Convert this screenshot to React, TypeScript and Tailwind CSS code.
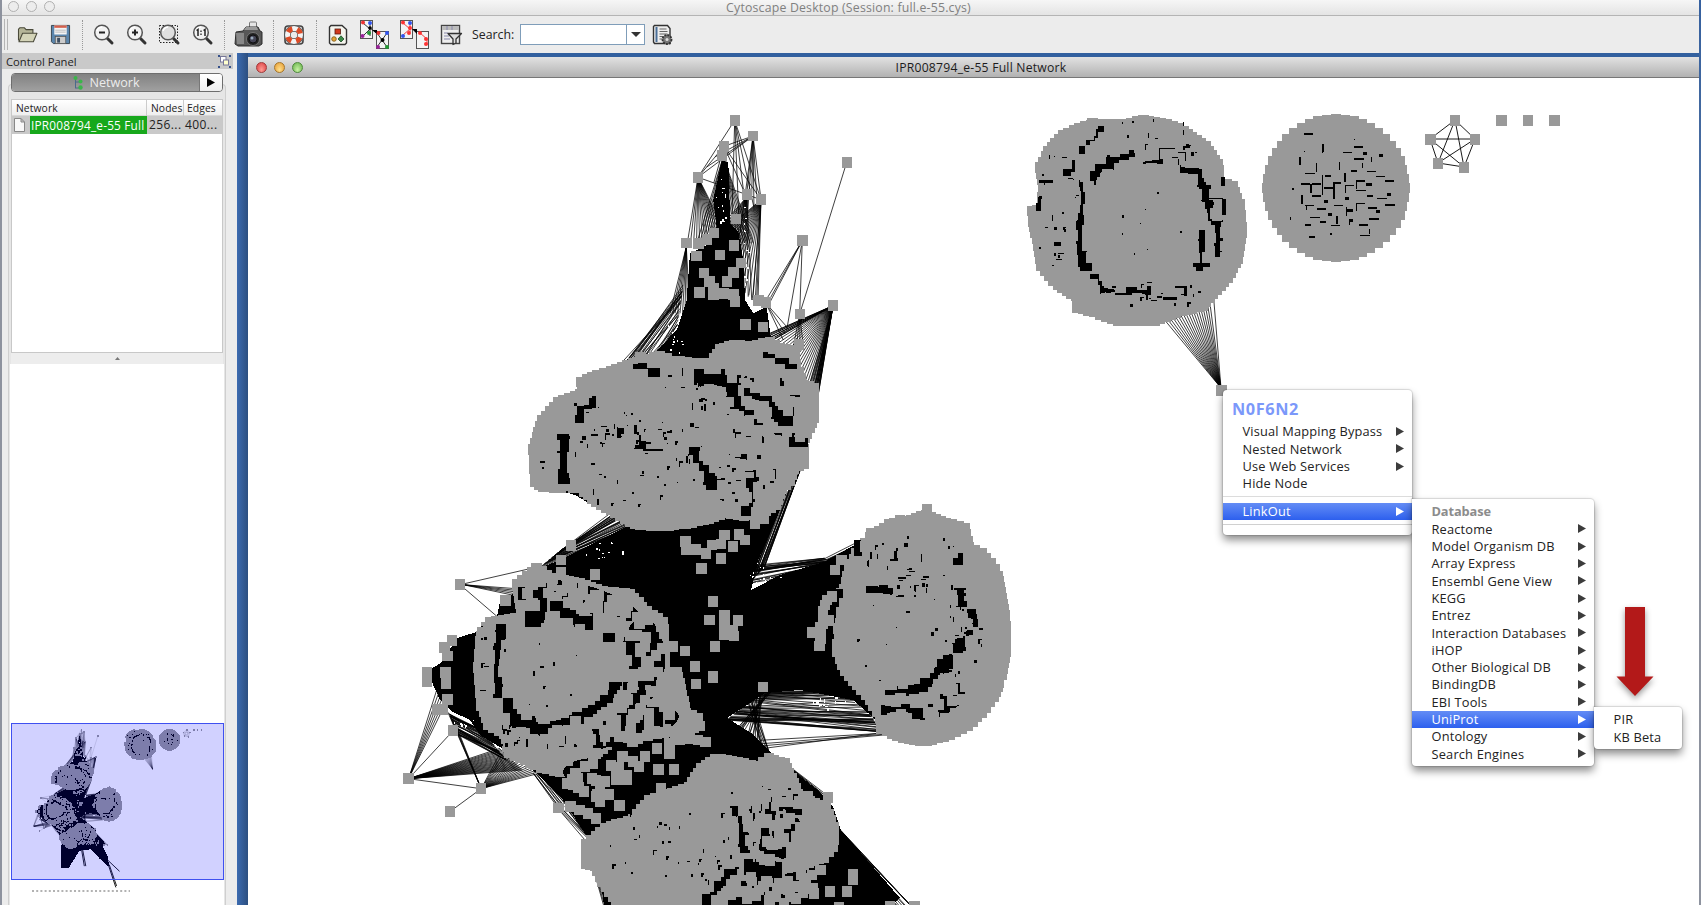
import React from "react";

type Pt = [number, number];

/* ---------- geometry helpers ---------- */
const tile = (ox: number, oy: number, kx: number, ky: number) => (list: number[]): Pt[] => {
  const out: Pt[] = [];
  for (let i = 0; i < list.length; i += 2) out.push([ox + list[i] / kx, oy + list[i + 1] / ky]);
  return out;
};
const neck = tile(400, 100, 3, 3);
const mid = tile(400, 380, 2.45, 3);
const low = tile(400, 620, 2.45, 3);
const east = tile(1010, 100, 2.613, 3);
const raw = tile(0, 0, 1, 1);

const makeRandom = (seed: number) => () => {
  seed = (seed * 1664525 + 1013904223) % 4294967296;
  return seed / 4294967296;
};
const poly = (p: Pt[]) => p.map((q) => q[0].toFixed(1) + "," + q[1].toFixed(1)).join(" ");
const box = (x: number, y: number, w: number, h: number) => `M${x.toFixed(1)} ${y.toFixed(1)}h${w.toFixed(1)}v${h.toFixed(1)}h${(-w).toFixed(1)}z`;
const squares = (p: Pt[]) => p.map((q) => box(q[0] - 5.2, q[1] - 5.4, 10.4, 10.8)).join("");

/* walk a polyline in even steps */
const walk = (p: Pt[], step: number, closed: boolean): Pt[] => {
  const out: Pt[] = [];
  const n = closed ? p.length : p.length - 1;
  for (let i = 0; i < n; i++) {
    const a = p[i];
    const b = p[(i + 1) % p.length];
    const d = Math.hypot(b[0] - a[0], b[1] - a[1]);
    const k = Math.max(1, Math.round(d / step));
    for (let j = 0; j < k; j++) out.push([a[0] + ((b[0] - a[0]) * j) / k, a[1] + ((b[1] - a[1]) * j) / k]);
  }
  return out;
};

/* cluster of nodes: filled outline with square nodes on its rim */
const Cluster = ({ outline, step = 6 }: { outline: Pt[]; step?: number }) => {
  const cx = outline.reduce((s, q) => s + q[0], 0) / outline.length;
  const cy = outline.reduce((s, q) => s + q[1], 0) / outline.length;
  const rim = outline.map(([x, y]): Pt => {
    const d = Math.hypot(x - cx, y - cy) || 1;
    return [x - ((x - cx) / d) * 5, y - ((y - cy) / d) * 5];
  });
  return (
    <>
      <polygon points={poly(rim)} />
      <path d={squares(walk(rim, step, true))} />
    </>
  );
};
const oval = (cx: number, cy: number, rx: number, ry: number, n = 48): Pt[] =>
  Array.from({ length: n }, (_, i): Pt => [cx + rx * Math.cos((i * 2 * Math.PI) / n), cy + ry * Math.sin((i * 2 * Math.PI) / n)]);

/* gap between rows of nodes: a dark band bitten into by the nodes on both sides */
const Gap = ({ p, size, seed }: { p: Pt[]; size: number; seed: number }) => {
  const r = makeRandom(seed);
  const q = walk(p, 5, false);
  let dark = "";
  const nodes: Pt[] = [];
  for (let i = 0; i < q.length - 1; i++) {
    const [x, y] = q[i];
    const [u, v] = q[i + 1];
    const s = size + 3;
    dark += box(Math.min(x, u) - s / 2, Math.min(y, v) - s / 2, Math.abs(u - x) + s, Math.abs(v - y) + s);
    const l = Math.hypot(u - x, v - y) || 1;
    const nx = -(v - y) / l;
    const ny = (u - x) / l;
    for (const side of [-1, 1]) {
      if (r() < 0.35) continue;
      const off = side * (size / 2 + 3.6 + r() * 3.4);
      nodes.push([x + nx * off + (r() - 0.5) * 3, y + ny * off + (r() - 0.5) * 3]);
    }
  }
  return (
    <>
      <path d={dark} />
      <path fill="#999" d={squares(nodes)} />
    </>
  );
};

/* loosely packed nodes over a dark ground */
const Field = ({ cx, cy, rx, ry, pitch, jitter, seed, turn = 0 }: { cx: number; cy: number; rx: number; ry: number; pitch: number; jitter: number; seed: number; turn?: number }) => {
  const r = makeRandom(seed);
  const nodes: Pt[] = [];
  const c = Math.cos((turn * Math.PI) / 180);
  const s = Math.sin((turn * Math.PI) / 180);
  for (let y = -ry - 6; y <= ry + 6; y += pitch)
    for (let x = -rx - 6; x <= rx + 6; x += pitch) {
      if ((x / (rx + 6)) ** 2 + (y / (ry + 6)) ** 2 > 1) continue;
      const px = x + (r() - 0.5) * jitter;
      const py = y + (r() - 0.5) * jitter;
      nodes.push([cx + px * c - py * s, cy + px * s + py * c]);
    }
  return (
    <>
      <ellipse cx={cx} cy={cy} rx={rx} ry={ry} transform={`rotate(${turn} ${cx} ${cy})`} />
      <path fill="#999" d={squares(nodes)} />
    </>
  );
};

/* random small gaps in an ellipse */
const specks = (cx: number, cy: number, rx: number, ry: number, count: number, max: number, seed: number) => {
  const r = makeRandom(seed);
  let d = "";
  for (let i = 0; i < count; i++) {
    const a = r() * Math.PI * 2;
    const m = Math.sqrt(r());
    const x = cx + Math.cos(a) * rx * m;
    const y = cy + Math.sin(a) * ry * m;
    const kind = r();
    const s = 1 + r() * max;
    if (kind < 0.25) d += box(x, y, s * 1.5, 1.3);
    else if (kind < 0.5) d += box(x, y, 1.2, s * 1.8);
    else if (kind < 0.82) d += box(x, y, s * 0.8, s * 0.9);
    else d += box(x, y, s * 1.2, 1.5) + box(x, y, 1.6, s * 1.5);
  }
  return d;
};

/* edges from one node to points spread on a line */
const fan = (from: Pt, a: Pt, b: Pt, n: number) =>
  Array.from({ length: n }, (_, i) => {
    const t = n === 1 ? 0 : i / (n - 1);
    return `M${from[0].toFixed(1)} ${from[1].toFixed(1)}L${(a[0] + (b[0] - a[0]) * t).toFixed(1)} ${(a[1] + (b[1] - a[1]) * t).toFixed(1)}`;
  }).join("");
/* edges between two lines */
const weave = (a: Pt, b: Pt, c: Pt, d: Pt, n: number, seed: number) => {
  const r = makeRandom(seed);
  let s = "";
  for (let i = 0; i < n; i++) {
    const t = r();
    const u = Math.min(1, Math.max(0, t + (r() - 0.5) * 0.6));
    s += `M${(a[0] + (b[0] - a[0]) * t).toFixed(1)} ${(a[1] + (b[1] - a[1]) * t).toFixed(1)}L${(c[0] + (d[0] - c[0]) * u).toFixed(1)} ${(c[1] + (d[1] - c[1]) * u).toFixed(1)}`;
  }
  return s;
};

/* ---------- network data ---------- */
const head: Pt[] = [
  ...neck([530, 840, 580, 818, 620, 806, 690, 778, 740, 765, 775, 755, 815, 768, 880, 774, 940, 776, 965, 735, 1010, 722, 1060, 728, 1120, 716, 1150, 735, 1195, 745, 1200, 790, 1225, 850]),
  ...mid([1025, 20, 1027, 110, 1010, 160, 1000, 190, 1000, 255, 975, 270, 965, 310, 945, 330, 930, 385, 890, 410, 850, 420, 800, 410, 760, 430, 700, 445, 640, 452, 570, 445, 520, 410, 460, 365, 430, 330, 380, 330, 340, 325, 320, 310, 315, 210, 335, 120, 375, 65, 430, 40, 440, 0]),
];
const westLobe: Pt[] = [
  ...mid([280, 600, 330, 552, 370, 580, 440, 595, 500, 620, 570, 630, 600, 670, 655, 720, 662, 880]),
  ...low([660, 155, 690, 155, 712, 285, 740, 300, 730, 330, 640, 350, 600, 350, 530, 360, 500, 400, 460, 425, 450, 470, 390, 470, 340, 455, 260, 410, 245, 350, 205, 320, 188, 260, 180, 140, 185, 60]),
  ...mid([190, 750, 210, 720, 290, 700, 285, 640]),
];
const eastLobe: Pt[] = [
  ...mid([1290, 390, 1340, 415, 1388, 430, 1400, 490, 1432, 507, 1457, 540, 1475, 580, 1487, 650, 1496, 740, 1497, 820, 1485, 890]),
  ...low([1478, 195, 1463, 240, 1432, 290, 1397, 330, 1350, 358, 1290, 378, 1230, 368, 1175, 340, 1172, 305, 1145, 250, 1110, 205, 1080, 160, 1060, 100]),
  ...mid([1058, 770, 1055, 700, 1040, 680, 1078, 620, 1090, 560, 1110, 510, 1145, 460, 1195, 420, 1250, 405]),
];
const southLobe: Pt[] = low([445, 675, 490, 625, 560, 595, 600, 535, 700, 490, 735, 430, 770, 402, 830, 412, 880, 425, 910, 402, 950, 420, 975, 480, 985, 515, 1015, 540, 1055, 560, 1075, 620, 1073, 680, 1050, 715, 1000, 738, 960, 750, 930, 775, 890, 770, 860, 755, 820, 760, 790, 790, 770, 830, 740, 850, 640, 856, 520, 852, 485, 790, 465, 740, 443, 735]);

const body: Pt[] = raw([
  560, 490, 577, 496, 608, 515, 640, 520, 590, 545, 560, 560, 540, 568, 520, 590, 500, 602, 497, 617, 480, 631, 457, 638, 441, 663, 427, 671, 440, 700, 453, 712, 470, 720, 480, 735, 500, 747, 535, 772, 563, 800, 588, 838, 590, 853, 602, 890, 604, 906,
  596, 906, 596, 1066, 650, 1060, 722, 945, 800, 935, 860, 1000, 925, 1056, 915, 985, 880, 915, 900, 898, 841, 830, 833, 807, 820, 792, 788, 767, 771, 753, 751, 733, 727, 718, 750, 703, 765, 693, 800, 690, 853, 700, 882, 725, 926, 600, 926, 512, 869, 537, 824, 562, 780, 575, 751, 590, 758, 560, 780, 510, 751, 500, 640, 500, 575, 470, 560, 470,
]);
const neckMass: Pt[] = neck([965, 185, 985, 185, 988, 270, 990, 370, 1015, 395, 1030, 480, 1035, 600, 1060, 640, 1100, 620, 1112, 710, 1100, 800, 800, 800, 770, 752, 830, 690, 860, 600, 870, 460, 930, 430, 950, 380, 940, 300]);

const neckNodes = neck([
  1004, 61, 1059, 108, 972, 139, 965, 167, 894, 232, 1041, 283, 1083, 299, 1340, 187, 1007, 357, 941, 399, 920, 418, 859, 429, 895, 430, 889, 468, 1001, 437, 960, 465, 1023, 489, 1000, 517, 912, 519, 928, 545, 981, 545, 940, 565, 898, 577, 940, 584, 970, 580, 1000, 583, 1005, 605, 1207, 422, 1299, 617, 1199, 642, 1075, 601, 1098, 607, 1036, 673, 1088, 681, 1196, 734, 1182, 775, 1010, 738,
]);
const midNodes = mid([
  1291, 388, 147, 614, 419, 496, 395, 540, 395, 576, 477, 583, 333, 565, 258, 661, 739, 565, 766, 665, 758, 720, 771, 799, 698, 813, 722, 860, 766, 890, 668, 800, 675, 886, 699, 485, 700, 508, 725, 508, 750, 520, 765, 495, 787, 535, 795, 465, 787, 492, 815, 500, 830, 463, 845, 480, 870, 430, 890, 415, 795, 705, 828, 722, 795, 735, 815, 750, 795, 765, 818, 768, 1010, 758, 1030, 775, 1028, 798, 1050, 722, 1065, 570, 127, 782, 109, 802, 116, 828, 66, 878, 111, 878, 1155, 460, 1225, 420, 1375, 445, 1082, 540,
]);
const lowNodes = low([
  66, 158, 66, 186, 111, 158, 112, 190, 116, 238, 90, 268, 104, 268, 130, 332, 21, 476, 199, 506, 122, 575, 889, 201, 722, 140, 725, 192, 767, 172, 571, 195, 537, 237, 520, 283, 748, 366, 660, 401, 671, 449, 640, 505, 538, 556, 388, 564, 418, 560, 633, 449, 1048, 533, 1000, 530, 1110, 762, 1110, 778, 1054, 814, 1095, 815, 1260, 858, 1200, 858, 1075, 862, 1030, 750, 1010, 765, 990, 785, 975, 800, 1012, 805, 970, 835, 940, 850, 905, 840, 880, 810, 850, 815, 820, 780, 822, 800, 810, 825, 790, 850, 850, 835, 930, 800, 950, 810,
  600, 240, 615, 215, 640, 195, 660, 260, 590, 265, 610, 310, 545, 350, 565, 335, 660, 370, 685, 358, 710, 355, 730, 360, 630, 385, 600, 410, 545, 410, 570, 425, 585, 440, 530, 450, 555, 465, 530, 480, 555, 480, 470, 475, 430, 460, 425, 495, 410, 490, 450, 515, 490, 495, 480, 530, 510, 525, 490, 545, 440, 570, 460, 580, 480, 595, 735, 318, 690, 325, 430, 305, 500, 330, 480, 400,
]);

const NetworkDrawing = React.memo(() => (
  <g shapeRendering="crispEdges">
    <g fill="none" stroke="#000" strokeWidth={0.75} shapeRendering="auto">
      {/* edges round the neck */}
      <path
        d={
          fan(neck([1004, 61])[0], neck([894, 232])[0], neck([894, 232])[0], 1) +
          fan(neck([1004, 61])[0], neck([995, 380])[0], neck([1083, 299])[0], 5) +
          fan(neck([1059, 108])[0], neck([1020, 400])[0], neck([1083, 299])[0], 4) +
          fan(neck([1059, 108])[0], neck([894, 232])[0], neck([972, 139])[0], 4) +
          fan(neck([1059, 108])[0], neck([1040, 283])[0], neck([1070, 290])[0], 3) +
          fan(neck([894, 232])[0], neck([862, 430])[0], neck([1000, 440])[0], 16) +
          fan(neck([894, 232])[0], neck([1083, 299])[0], neck([1083, 299])[0], 1) +
          fan(neck([972, 139])[0], neck([894, 232])[0], neck([1083, 299])[0], 5) +
          fan(neck([970, 170])[0], neck([890, 430])[0], neck([1060, 430])[0], 20) +
          fan(neck([1083, 299])[0], neck([870, 480])[0], neck([1070, 600])[0], 18) +
          fan(neck([1041, 290])[0], neck([900, 450])[0], neck([1055, 600])[0], 16) +
          fan(neck([1083, 299])[0], neck([1058, 600])[0], neck([1074, 600])[0], 3) +
          fan(neck([1207, 422])[0], neck([1098, 600])[0], neck([1050, 720])[0], 3) +
          fan(neck([1207, 422])[0], neck([1160, 690])[0], neck([1199, 640])[0], 2) +
          fan(neck([1340, 187])[0], neck([1199, 642])[0], neck([1199, 642])[0], 1) +
          fan(neck([1299, 617])[0], neck([1090, 712])[0], neck([1250, 900])[0], 26) +
          fan(neck([1299, 617])[0], neck([1220, 880])[0], neck([1252, 900])[0], 10) +
          fan(neck([1199, 642])[0], neck([1180, 740])[0], neck([1210, 740])[0], 4) +
          fan(neck([1098, 610])[0], neck([1160, 680])[0], neck([1150, 720])[0], 3) +
          fan(neck([859, 440])[0], neck([810, 640])[0], neck([870, 640])[0], 9) +
          weave(neck([850, 550])[0], neck([830, 690])[0], neck([650, 810])[0], neck([760, 790])[0], 26, 3) +
          `M${neck([810, 630])[0]}L${neck([640, 815])[0]}`
        }
      />
      <path strokeWidth={1} d={fan(neck([1299, 617])[0], neck([1110, 700])[0], neck([1110, 725])[0], 5) + fan(neck([1299, 617])[0], neck([1236, 895])[0], neck([1252, 900])[0], 5)} />
      {/* edges of the middle */}
      <path
        d={
          weave(mid([400, 505])[0], mid([340, 565])[0], mid([515, 400])[0], mid([570, 450])[0], 34, 7) +
          fan(mid([147, 614])[0], mid([333, 562])[0], mid([333, 562])[0], 1) +
          fan(mid([155, 614])[0], mid([285, 626])[0], mid([275, 645])[0], 5) +
          fan(mid([147, 614])[0], mid([240, 712])[0], mid([240, 712])[0], 1) +
          weave(mid([985, 260])[0], mid([920, 390])[0], mid([893, 560])[0], mid([850, 620])[0], 22, 9) +
          weave(mid([830, 560])[0], mid([850, 640])[0], mid([1040, 535])[0], mid([1080, 570])[0], 26, 10) +
          weave(mid([1040, 535])[0], mid([1060, 560])[0], mid([1155, 465])[0], mid([1180, 490])[0], 14, 12) +
          fan(mid([1291, 388])[0], mid([1330, 425])[0], mid([1330, 440])[0], 3) +
          weave(low([885, 215])[0], low([800, 300])[0], low([1110, 210])[0], low([1180, 335])[0], 50, 13) +
          weave(low([840, 270])[0], low([900, 400])[0], low([1160, 290])[0], low([1185, 345])[0], 7, 22) +
          weave(low([910, 215])[0], low([850, 240])[0], low([830, 320])[0], low([905, 400])[0], 24, 15)
        }
      />
      {/* edges of the west and south */}
      <path
        d={
          fan(low([21, 476])[0], low([90, 210])[0], low([116, 240])[0], 6) +
          fan(low([21, 476])[0], low([130, 332])[0], low([130, 332])[0], 1) +
          fan(low([21, 476])[0], low([245, 385])[0], low([300, 450])[0], 22) +
          fan(low([21, 476])[0], low([199, 506])[0], low([199, 506])[0], 1) +
          fan(low([199, 506])[0], low([115, 270])[0], low([145, 340])[0], 5) +
          fan(low([199, 506])[0], low([245, 400])[0], low([340, 460])[0], 18) +
          fan(low([199, 506])[0], low([122, 575])[0], low([122, 575])[0], 1) +
          weave(low([120, 280])[0], low([140, 345])[0], low([200, 330])[0], low([260, 420])[0], 44, 18) +
          weave(low([325, 460])[0], low([360, 470])[0], low([385, 560])[0], low([420, 550])[0], 12, 4) +
          weave(low([380, 560])[0], low([430, 560])[0], low([460, 670])[0], low([480, 640])[0], 14, 5) +
          weave(low([465, 730])[0], low([480, 740])[0], low([495, 855])[0], low([520, 855])[0], 8, 6) +
          weave(low([1080, 630])[0], low([1060, 640])[0], low([1250, 855])[0], low([1200, 855])[0], 18, 8) +
          weave(low([945, 430])[0], low([960, 450])[0], low([1040, 520])[0], low([1000, 540])[0], 12, 11)
        }
      />
      <path d="M925 1040L975 1185M915 1030L970 1195M905 1000L995 1085M742 930L765 1050M735 930L755 1050" strokeWidth={6} />
    </g>

    <polygon points={poly(neckMass)} />
    <polygon points={poly(body)} />
    <path
      fill="#fff"
      d={
        specks(765, 574, 18, 12, 14, 0.6, 55) + specks(826, 702, 32, 6, 16, 1, 56) + specks(465, 722, 12, 5, 6, 1, 57) + specks(603, 550, 20, 9, 14, 0.5, 58) +
        specks(722, 200, 6, 26, 12, 1, 59) + specks(675, 335, 8, 22, 12, 0.5, 63) + specks(745, 245, 3, 40, 14, 1, 62)
      }
    />

    <g fill="#999">
      <Cluster outline={oval(662, 905, 42, 26)} />
      <Cluster outline={head} />
      <Cluster outline={westLobe} />
      <Cluster outline={eastLobe} />
      <Cluster outline={southLobe} />
    </g>

    {/* loosely packed parts */}
    <Field cx={765} cy={412} rx={38} ry={42} pitch={9.4} jitter={6.5} seed={101} />
    <Field cx={745} cy={475} rx={36} ry={26} pitch={9.3} jitter={5.5} seed={102} turn={-30} />
    <Field cx={680} cy={378} rx={60} ry={10} pitch={9.2} jitter={6} seed={103} />
    <Field cx={590} cy={601} rx={52} ry={14} pitch={9.6} jitter={7} seed={104} turn={18} />
    <Field cx={643} cy={660} rx={22} ry={42} pitch={11.2} jitter={9} seed={105} />
    <Field cx={620} cy={728} rx={60} ry={17} pitch={12} jitter={10} seed={106} turn={-12} />
    <Field cx={552} cy={738} rx={42} ry={11} pitch={9.6} jitter={6.5} seed={107} />
    <Field cx={595} cy={772} rx={32} ry={14} pitch={12.5} jitter={10} seed={108} />
    <Field cx={768} cy={832} rx={34} ry={30} pitch={9.8} jitter={7} seed={109} />
    <Field cx={775} cy={885} rx={36} ry={12} pitch={11} jitter={9} seed={110} />
    <Field cx={938} cy={700} rx={32} ry={16} pitch={9.8} jitter={7} seed={111} turn={-25} />
    <Field cx={895} cy={575} rx={34} ry={24} pitch={9.2} jitter={5.5} seed={112} />

    {/* gaps inside the head */}
    <Gap p={neck([710, 805, 740, 800, 780, 830])} size={5} seed={1} />
    <Gap p={neck([905, 830, 960, 830, 1000, 860, 1010, 900])} size={13} seed={2} />
    <Gap p={mid([745, 0, 790, 5, 820, 40, 830, 75, 860, 90])} size={10} seed={3} />
    <Gap p={mid([855, 40, 910, 65, 930, 100, 960, 130])} size={8} seed={4} />
    <Gap p={neck([1100, 768, 1150, 782, 1195, 800])} size={5} seed={5} />
    <Gap p={mid([470, 60, 440, 90, 440, 130])} size={6} seed={6} />
    <Gap p={mid([400, 180, 400, 235, 402, 310])} size={9} seed={36} />
    <Gap p={mid([545, 160, 575, 150, 595, 205])} size={7} seed={7} />
    <Gap p={mid([720, 215, 740, 265, 760, 300, 770, 330])} size={6} seed={8} />
    <Gap p={mid([860, 310, 865, 370, 840, 405])} size={7} seed={9} />
    <Gap p={mid([965, 185, 1000, 190])} size={6} seed={11} />
    <path d={box(643, 449, 20, 1.6) + specks(620, 460, 80, 50, 48, 2.8, 15) + specks(590, 430, 30, 35, 14, 4, 18) + specks(700, 395, 30, 12, 10, 4, 17) + specks(675, 440, 30, 22, 12, 4, 19)} />

    {/* gaps inside the west lobe */}
    <Gap p={mid([305, 640, 340, 640, 345, 690, 315, 730])} size={10} seed={20} />
    <Gap p={mid([380, 680, 430, 710, 470, 740])} size={8} seed={21} />
    <Gap p={mid([560, 800, 560, 850, 548, 900])} size={9} seed={50} />
    <Gap p={low([545, 170, 520, 220, 480, 260, 440, 290, 390, 305, 340, 325, 290, 300, 260, 240])} size={9} seed={22} />
    <Gap p={low([240, 220, 238, 150, 240, 90, 250, 10])} size={6} seed={51} />
    <Gap p={low([575, 130, 560, 190, 600, 195])} size={9} seed={24} />
    <Gap p={low([590, 230, 550, 290, 560, 330, 640, 290])} size={10} seed={25} />
    <Gap p={low([480, 340, 490, 390])} size={5} seed={23} />
    <path d={box(...mid([498, 758])[0], 12, 9) + specks(545, 665, 48, 42, 10, 2, 29) + specks(480, 660, 5, 50, 6, 3, 34) + specks(505, 735, 14, 12, 8, 3, 35)} />

    {/* gaps inside the east lobe */}
    <Gap p={mid([1370, 530, 1358, 560])} size={4} seed={40} />
    <Gap p={mid([1370, 640, 1382, 680])} size={7} seed={52} />
    <Gap p={mid([1400, 700, 1405, 745, 1370, 800, 1340, 850, 1310, 890])} size={5} seed={53} />
    <Gap p={low([1340, 120, 1310, 165, 1280, 205, 1240, 215, 1190, 235])} size={8} seed={41} />
    <Gap p={low([1190, 270, 1240, 265, 1280, 290])} size={6} seed={42} />
    <Gap p={mid([1150, 628, 1212, 635])} size={3} seed={43} />
    <Gap p={mid([1120, 490, 1125, 530])} size={4} seed={44} />
    <Gap p={mid([1075, 640, 1055, 700, 1050, 780])} size={6} seed={54} />
    <path d={specks(915, 570, 50, 42, 28, 3.5, 45) + specks(955, 640, 26, 50, 26, 3, 46) + specks(880, 640, 30, 50, 6, 1, 48)} />

    {/* gaps inside the south lobe */}
    <Gap p={low([820, 570, 835, 620, 850, 700])} size={6} seed={60} />
    <Gap p={low([890, 640, 895, 690, 945, 700])} size={7} seed={61} />
    <Gap p={low([860, 740, 890, 745, 930, 755])} size={12} seed={62} />
    <Gap p={low([955, 540, 960, 570, 990, 575])} size={6} seed={63} />
    <Gap p={low([810, 765, 780, 800, 745, 850])} size={9} seed={64} />
    <path d={specks(680, 845, 82, 40, 40, 2.6, 65) + specks(760, 800, 36, 22, 14, 3.5, 66)} />

    <path fill="#999" d={squares([...neckNodes, ...midNodes, ...lowNodes])} />

    {/* first detached component */}
    <path fill="none" stroke="#000" strokeWidth={0.75} shapeRendering="auto" d={fan([1221, 388], [1163, 318], [1209, 296], 19) + fan([1221, 388], [1213, 290], [1213, 290], 1)} />
    <g fill="#999">
      <Cluster outline={east([350, 45, 415, 58, 460, 80, 520, 130, 555, 185, 560, 240, 595, 255, 612, 310, 619, 400, 608, 480, 580, 540, 540, 590, 512, 628, 440, 650, 380, 676, 280, 678, 215, 650, 170, 635, 165, 600, 115, 565, 70, 505, 65, 460, 50, 380, 46, 332, 70, 325, 75, 250, 68, 195, 90, 145, 130, 95, 190, 65, 240, 58, 300, 58])} />
      <Cluster outline={oval(1336, 188, 73.5, 73.5)} />
    </g>
    <Gap p={east([235, 90, 210, 125, 180, 160])} size={5} seed={70} />
    <Gap p={east([160, 190, 160, 210, 135, 225])} size={4} seed={94} />
    <Gap p={east([212, 240, 235, 205, 280, 182, 320, 165, 375, 150])} size={8.5} seed={73} />
    <Gap p={east([355, 140, 355, 185, 405, 185])} size={2} seed={74} />
    <Gap p={east([215, 235, 190, 260, 188, 330, 182, 390, 186, 450, 205, 500])} size={4.5} seed={75} />
    <Gap p={east([190, 475, 208, 508])} size={7} seed={76} />
    <Gap p={east([220, 535, 245, 565, 290, 580, 330, 570, 372, 574])} size={5} seed={77} />
    <Gap p={east([455, 215, 495, 225, 510, 260, 518, 320, 525, 365, 545, 380, 542, 430, 530, 470])} size={6} seed={78} />
    <Gap p={east([500, 400, 500, 450, 490, 490, 500, 515])} size={4} seed={80} />
    <path
      d={
        east([75, 240, 100, 243, 68, 310, 72, 290, 478, 488, 400, 592, 430, 558, 115, 425, 518, 294, 550, 232, 455, 560]).map(([x, y], i) => box(x, y, [14, 5, 5, 3, 17, 14, 12, 7, 15, 4, 3][i], [2.5, 1.5, 8, 10, 4, 3, 2, 4, 1, 9, 9][i])).join("") +
        east([555, 296, 388, 145, 388, 145, 440, 155, 457, 155]).map(([x, y], i) => box(x, y, [4, 1, 16, 7, 1][i], [16, 12, 1, 1, 9][i])).join("") +
        specks(1055, 210, 22, 60, 22, 2.6, 86) +
        specks(1150, 128, 42, 12, 8, 2, 87) +
        specks(1155, 292, 60, 15, 20, 2.8, 88) +
        specks(1150, 225, 38, 40, 8, 0.6, 89) +
        specks(1182, 155, 16, 12, 8, 3, 93)
      }
    />
    <path
      d={
        east([
          770, 218, 822, 225, 760, 250, 790, 285, 820, 300, 820, 262, 850, 245, 876, 255, 905, 240, 875, 290, 905, 270, 930, 250, 957, 228, 980, 240, 985, 278, 960, 293, 932, 285, 905, 308, 935, 320, 957, 330, 980, 313, 880, 328, 846, 315, 802, 323, 830, 340, 785, 350, 810, 362, 870, 155, 898, 138, 922, 155, 898, 175, 892, 210, 932, 213, 912, 373, 885, 358, 938, 355, 770, 372, 772, 315, 768, 100, 963, 162, 915, 405, 780, 408, 838, 375, 788, 250,
        ])
          .map(([x, y], i) => box(x, y, [10, 6, 9, 9, 4][i % 5], [1.3, 2.4, 1.2, 2, 3][i % 5]))
          .join("") +
        east([755, 170, 800, 190, 815, 225, 872, 220, 860, 185, 845, 245, 874, 255, 785, 252, 815, 262, 760, 285, 903, 308, 877, 322, 853, 348, 773, 315, 920, 190, 942, 172, 885, 360, 937, 388, 816, 132, 904, 240, 815, 250, 845, 270])
          .map(([x, y], i) => box(x, y, i % 3 === 0 ? 1.8 : 1.2, i > 12 && i < 18 ? 5 : i % 2 ? 9 : 8))
          .join("") +
        specks(1336, 190, 62, 60, 7, 1, 91)
      }
    />

    {/* pentagon and single nodes */}
    <path fill="none" stroke="#000" strokeWidth={0.9} shapeRendering="auto" d="M1455 120L1430 139L1438 163L1464 167L1475 139ZM1455 120L1438 163L1475 139L1430 139L1464 167Z" />
    <path fill="#999" d={squares(raw([1455, 120.3, 1430.4, 139.7, 1475, 139.7, 1438, 163.5, 1464, 167.7, 1501.5, 120.3, 1528, 120.3, 1554.5, 120.3, 1221.3, 390.5]))} />
  </g>
));

/* ---------- toolbar icons ---------- */
const Lens = ({ children, frame }: { children?: React.ReactNode; frame?: boolean }) => (
  <svg className="h-[24px] w-[24px]" viewBox="0 0 24 24" fill="none">
    {frame && <rect x="1.5" y="2.500" width="18" height="17" stroke="#222" strokeDasharray="1.5 1.5" />}
    <path d="M15.500 15.500L20 20" stroke="#333" strokeWidth="3" strokeLinecap="round" />
    <circle cx="10" cy="9.500" r="7.300" fill={frame ? "#dfdfdf" : "#f2f2f2"} stroke="#555" strokeWidth="1.500" />
    <path d="M5 8a6 6 0 0 1 5-4" stroke="#fff" strokeWidth="1.500" />
    {children}
  </svg>
);
const Dots = () => <div className="h-[30px] w-0 border-l border-dotted border-[#999]" />;

const Toolbar = () => (
  <div className="flex h-[37px] shrink-0 items-center bg-[#ececec] pl-[2px]">
    <div className="h-[31px] w-[4px] border-x border-[#b5b5b5]" />
    <svg className="ml-[8px] h-[18px] w-[23px]" viewBox="0 0 23 20">
      <path d="M1.500 16V3.500L3 2h5l2 2h7.500v4" fill="#b5b598" stroke="#4a4a3a" strokeWidth="1.200" />
      <path d="M2 17.500L6 8h16l-4 9.500z" fill="#d4d4b8" stroke="#4a4a3a" strokeWidth="1.200" strokeLinejoin="round" />
    </svg>
    <svg className="ml-[11px] h-[21px] w-[21px]" viewBox="0 0 21 22">
      <path d="M1 1.500h19v19H3l-2-2z" fill="#5b86ad" stroke="#36434f" />
      <rect x="4" y="1.500" width="13" height="9.500" fill="#f4f4f4" />
      <rect x="4" y="1.500" width="13" height="2.500" fill="#d4604c" />
      <path d="M5 6.500h11M5 8.500h11" stroke="#bbb" />
      <rect x="5" y="13" width="11" height="7.500" fill="#ccc" stroke="#555" strokeWidth=".8" />
      <rect x="7" y="14.500" width="3" height="5" fill="#3d4f63" />
    </svg>
    <div className="ml-[11px]"><Dots /></div>
    <div className="ml-[9px] flex gap-[9px]">
      <Lens><path d="M7 9.500h6" stroke="#222" strokeWidth="2" /></Lens>
      <Lens><path d="M7 9.500h6M10 6.500v6" stroke="#222" strokeWidth="2" /></Lens>
      <Lens frame />
      <Lens><path d="M5.500 7.500L7 6.500V13M12.500 7.500l1.500-1V13" stroke="#222" strokeWidth="1.500" /><path d="M10 7.500V9M10 10.500V12" stroke="#222" strokeWidth="1.300" /></Lens>
    </div>
    <div className="ml-[9px]"><Dots /></div>
    <svg className="ml-[9px] h-[27px] w-[30px]" viewBox="0 0 30 27">
      <rect x="15.500" y="1" width="7" height="6" rx="1" fill="#e5e5e5" stroke="#777" />
      <path d="M2 11l7-1 3-4h12l2 4 2 1v12l-3 2H4l-3-2z" fill="#575757" stroke="#2c2c2c" />
      <path d="M2 12h8v11H3z" fill="#888" />
      <path d="M12 6h11l1 3H10z" fill="#9a9a9a" />
      <circle cx="19" cy="18" r="6.500" fill="#222" stroke="#777" />
      <circle cx="19" cy="18" r="4" fill="#445" stroke="#111" />
      <circle cx="18" cy="17" r="1.500" fill="#9ab" />
    </svg>
    <div className="ml-[9px]"><Dots /></div>
    <svg className="ml-[9px] h-[22px] w-[22px]" viewBox="0 0 22 22" fill="none">
      <rect x="2" y="2" width="18" height="18" rx="3" stroke="#444" strokeWidth="1.600" />
      <circle cx="11" cy="11" r="6.500" stroke="#555" strokeWidth="6.500" />
      <circle cx="11" cy="11" r="6.500" stroke="#f3f3f3" strokeWidth="5" />
      <circle cx="11" cy="11" r="6.500" stroke="#dd4a25" strokeWidth="5" strokeDasharray="5.105 5.105" strokeDashoffset="-2.550" />
    </svg>
    <div className="ml-[11px]"><Dots /></div>
    <svg className="ml-[11px] h-[22px] w-[20px]" viewBox="0 0 20 22">
      <path d="M3 1.500h11l4.500 4V19L17 20.500H3L1.500 19V3z" fill="#f5f5ee" stroke="#333" strokeWidth="1.400" />
      <rect x="7" y="5" width="5.500" height="5" fill="#d33a1c" stroke="#5a1a10" strokeWidth=".8" />
      <circle cx="6" cy="15" r="2.300" fill="#e6a534" stroke="#7a5514" strokeWidth=".8" />
      <path d="M13 11.800l3 3.200-3 3-3-3z" fill="#3a8a48" stroke="#1e4a26" strokeWidth=".8" />
    </svg>
    <svg className="ml-[11px] h-[31px] w-[31px]" viewBox="0 0 31 31">
      <g fill="#f4f4f4" stroke="#555"><rect x="1.500" y="1.500" width="12" height="18" /><rect x="17.500" y="12.500" width="12" height="17" /></g>
      <path d="M4 4l7 6-7 7M11 4v13M18 14l10 14M28 14L18 28M11 9l8 6" stroke="#333" fill="none" />
      <path d="M13 11h5v4z" />
      <g fill="#e33"><circle cx="4" cy="3.500" r="2" /><circle cx="19.500" cy="14" r="2" /></g>
      <g fill="#35e"><circle cx="11" cy="4" r="2" /><circle cx="28" cy="14" r="2" /></g>
      <g fill="#929"><circle cx="3.500" cy="17" r="2" /><circle cx="19" cy="28" r="2" /></g>
      <g fill="#293"><circle cx="10" cy="14" r="2" /><circle cx="28" cy="28" r="2" /></g>
      <circle cx="11" cy="9" r="1.800" /><circle cx="23.500" cy="21" r="2" />
    </svg>
    <svg className="ml-[9px] h-[31px] w-[31px]" viewBox="0 0 31 31">
      <g fill="#f4f4f4" stroke="#555"><rect x="1.500" y="1.500" width="12" height="18" /><rect x="17.500" y="12.500" width="12" height="17" /></g>
      <path d="M4 4l7 6-7 6M11 4v9M21 14l7 6v6" stroke="#e44" fill="none" />
      <path d="M13 10h5v5z" />
      <g fill="#f33"><circle cx="4" cy="3.500" r="2" /><circle cx="11" cy="9" r="2" /><circle cx="10" cy="14" r="2" /><circle cx="21" cy="14" r="2" /><circle cx="27" cy="20" r="2" /><circle cx="27" cy="25" r="2" /></g>
      <g fill="#35e"><circle cx="11" cy="4" r="2" /><circle cx="4" cy="17" r="2" /></g>
    </svg>
    <svg className="ml-[10px] h-[22px] w-[23px]" viewBox="0 0 23 22">
      <rect x="1.500" y="1.500" width="18" height="18" fill="#eee" stroke="#444" strokeWidth="1.400" />
      <rect x="2" y="2" width="17" height="4" fill="#bbb" />
      <path d="M4 9h4M4 12h5M4 15h6M7 2v4M12 2v4" stroke="#88a" />
      <path d="M8 9.500h13.500L16 15v4l-3 1.500V15z" fill="#ddd" stroke="#333" strokeWidth="1.300" strokeLinejoin="round" />
    </svg>
    <span className="mt-[2px] ml-[9px] w-[48px] text-[12.300px] text-[#222]">Search:</span>
    <div className="flex h-[21px] w-[125px] border border-[#7f9db9] bg-white">
      <div className="flex-1 border-r border-[#7f9db9]" />
      <div className="flex w-[17px] items-center justify-center">
        <svg className="h-[5px] w-[10px]" viewBox="0 0 10 5"><path d="M0 0h10L5 5z" fill="#333" /></svg>
      </div>
    </div>
    <svg className="ml-[7px] h-[22px] w-[21px]" viewBox="0 0 21 22">
      <path d="M2.500 1.500h13l2.500 3V19.500H2.500L1.500 18V2.500z" fill="#eee" stroke="#333" strokeWidth="1.400" />
      <rect x="3.500" y="3" width="2" height="15" fill="#4a6f98" />
      <path d="M7.500 5h7M7.500 7.500h8M7.500 10h8M7.500 12.500h4M7.500 15h3" stroke="#666" />
      <circle cx="15" cy="15.500" r="4.500" fill="#777" stroke="#333" strokeWidth="1.800" strokeDasharray="2 1" />
      <circle cx="15" cy="15.500" r="1.500" fill="#ddd" />
    </svg>
  </div>
);

/* ---------- menus ---------- */
const Tri = ({ white }: { white?: boolean }) => (
  <svg className="h-[9px] w-[8px]" viewBox="0 0 8 9"><path d="M0 0l8 4.500L0 9z" fill={white ? "#fff" : "#3c3c3c"} /></svg>
);
const Item = ({ label, arrow, active, muted }: { label: string; arrow?: boolean; active?: boolean; muted?: boolean }) => (
  <div
    className={
      "flex h-[17.3px] items-center justify-between pl-[19.5px] pr-[8.5px] whitespace-nowrap text-[12.8px] " +
      (active ? "bg-linear-to-b from-[#648cf5] to-[#2d5fee] text-white tracking-[0.19px]" : muted ? "font-bold text-[#8c8c8c] -tracking-[0.1px]" : "text-[#222] tracking-[0.19px]")
    }
  >
    <span className="relative top-[0.4px]">{label}</span>
    {arrow && <Tri white={active} />}
  </div>
);

const databases = ["Reactome", "Model Organism DB", "Array Express", "Ensembl Gene View", "KEGG", "Entrez", "Interaction Databases", "iHOP", "Other Biological DB", "BindingDB", "EBI Tools", "UniProt", "Ontology", "Search Engines"];

const menuClass = "absolute bg-white shadow-[0_5px_9px_rgba(0,0,0,0.45),0_0_1px_1px_rgba(0,0,0,0.13)] ";

const Light = ({ tone }: { tone: string }) => <span className={"h-[11px] w-[11px] rounded-full border " + tone} />;

export default function App() {
  return (
    <div className="relative flex h-[905px] w-[1701px] flex-col overflow-hidden border-l-2 border-[#8d929e] bg-[#ececec] font-['Open_Sans','Noto_Sans',sans-serif]">
      <div className="relative flex h-[16px] shrink-0 justify-center border-b border-[#b4b4b4] bg-linear-to-b from-[#f6f6f6] to-[#e4e4e4]">
        <div className="absolute top-[1px] left-[6px] flex gap-[7px]">
          <Light tone="border-[#b0b0b0] bg-[#ededed]" />
          <Light tone="border-[#b0b0b0] bg-[#ededed]" />
          <Light tone="border-[#b0b0b0] bg-[#ededed]" />
        </div>
        <span className="mr-[6px] h-[15px] text-[12.3px] leading-[15px] tracking-[0.19px] text-[#808080]">Cytoscape Desktop (Session: full.e-55.cys)</span>
      </div>
      <Toolbar />

      <div className="flex min-h-0 flex-1">
        {/* control panel */}
        <div className="flex w-[235px] shrink-0 flex-col">
          <div className="flex h-[16px] w-[231px] shrink-0 items-center justify-between bg-[#c9c9c9] pr-[2px] pl-[4px]">
            <span className="text-[11.2px] leading-[17px] text-[#222]">Control Panel</span>
            <svg className="h-[13px] w-[13px]" viewBox="0 0 13 13" fill="none">
              <rect x="2.500" y="1.500" width="5.500" height="5.500" fill="#fff" stroke="#779" />
              <rect x="5.500" y="5" width="5" height="5" fill="#ffc" stroke="#779" />
              <path d="M0 0h2v2H0zM11 0h2v2h-2zM0 11h2v2H0zM11 11h2v2h-2z" fill="#35508a" />
            </svg>
          </div>
          <div className="mx-[6px] mt-[15px] flex min-h-0 w-[218px] flex-1 flex-col rounded-t border border-b-0 border-[#cfcfcf] bg-[#e6e6e6] px-[2px]">
            <div className="-mt-[12px] flex h-[19px] shrink-0 overflow-hidden rounded-[4px] border border-[#6e6e6e]">
              <div className="flex flex-1 items-center justify-center gap-[6px] bg-linear-to-b from-[#828282] to-[#a0a0a0] pl-[2px]">
                <svg className="h-[14px] w-[10px]" viewBox="0 0 10 14">
                  <path d="M2.500 2v10.500M3 6h4M3 12h4" stroke="#4a6a8a" fill="none" />
                  <g fill="#3bb54a"><circle cx="2.500" cy="2" r="2" /><circle cx="7.500" cy="5.500" r="2" /><circle cx="7.500" cy="11.500" r="2.200" /></g>
                </svg>
                <span className="text-[12.6px] leading-[16px] text-[#ececec]">Network</span>
              </div>
              <div className="flex w-[23px] items-center justify-center border-l border-[#777] bg-linear-to-b from-white to-[#eee]">
                <svg className="h-[9px] w-[8px]" viewBox="0 0 8 9"><path d="M0 0l8 4.500L0 9z" /></svg>
              </div>
            </div>
            <div className="mt-[7px] flex h-[254px] shrink-0 flex-col border border-[#c8c8c8] bg-white text-[#222]">
              <div className="flex h-[16px] shrink-0 items-center border-b border-[#d8d8d8] bg-linear-to-b from-white to-[#efefef] text-[10.3px] leading-[16px] tracking-[0.1px]">
                <span className="w-[135px] border-r border-[#ccc] pl-[4px]">Network</span>
                <span className="w-[37px] border-r border-[#ccc] pl-[4px]">Nodes</span>
                <span className="w-[37px] pl-[3px]">Edges</span>
              </div>
              <div className="flex h-[18px] shrink-0 items-center bg-[#c9c9c9] text-[12px] leading-[18px] whitespace-nowrap">
                <svg className="ml-[2px] h-[14px] w-[11px]" viewBox="0 0 11 14"><path d="M.5.500h6.500l3.500 3.500v9.500H.5zM7 .5V4h3.500" fill="#f8f8f8" stroke="#888" /></svg>
                <span className="ml-[5px] w-[117px] bg-[#17a81c] pl-[1px] text-[11.8px] tracking-[0.2px] text-white">IPR008794_e-55 Full</span>
                <span className="w-[37px] pl-[2px] tracking-[0.4px]">256...</span>
                <span className="pl-[1px] tracking-[0.4px]">400...</span>
              </div>
            </div>
            <div className="flex h-[11px] shrink-0 items-center justify-center bg-[#ededed]">
              <svg className="h-[3px] w-[5px]" viewBox="0 0 5 3"><path d="M0 3L2.500 0L5 3z" fill="#777" /></svg>
            </div>
            <div className="-mx-[1px] flex min-h-0 flex-1 flex-col overflow-hidden bg-white pt-[359px] pl-[1px]">
              <svg className="h-[182px] w-[214px] shrink-0" viewBox="0 0 214 182">
                <g transform="translate(-1 0.500) scale(0.1466) translate(-248 -77)">
                  <use href="#network" />
                </g>
                <rect x="0.500" y="0.500" width="212" height="156" fill="#0000ff" fillOpacity="0.180" stroke="#3f50f0" />
                <path d="M21 168h98" stroke="#999" strokeWidth="1.500" strokeDasharray="2 2.200" />
              </svg>
            </div>
          </div>
        </div>

        {/* desktop with the network window */}
        <div className="flex min-w-0 flex-1 bg-linear-to-r from-[#3c6bb0] to-[#2c4f80] bg-[length:11px_100%] bg-no-repeat pl-[11px]">
          <div className="flex min-w-0 flex-1 flex-col border-t-[4px] border-t-[#32609f] bg-white">
            <div className="relative flex h-[21px] shrink-0 items-center justify-center border-b border-[#777] bg-linear-to-b from-[#e2e2e2] to-[#b2b2b2]">
              <div className="absolute top-[5px] left-[8px] flex gap-[7px]">
                <Light tone="border-[#a03a3a] bg-radial-[at_50%_75%] from-[#ff9c94] to-[#d93c3e]" />
                <Light tone="border-[#a5762c] bg-radial-[at_50%_75%] from-[#ffe08c] to-[#e59a30]" />
                <Light tone="border-[#4f8a3c] bg-radial-[at_50%_75%] from-[#c8f2a4] to-[#63b046]" />
              </div>
              <span className="ml-[13px] pt-[2px] text-[12.2px] leading-[18px] font-medium tracking-[0.22px] text-[#1c1c1c]">IPR008794_e-55 Full Network</span>
            </div>
            <svg className="min-h-0 w-full flex-1" viewBox="248 78 1453 827" preserveAspectRatio="xMinYMin slice">
              <g id="network"><NetworkDrawing /></g>
            </svg>
          </div>
        </div>
      </div>

      {/* screen edge beside the main window */}
      <div className="absolute top-0 right-0 h-full w-[2px] bg-linear-to-b from-[#35609f] via-[#4a6da0] via-20% to-[#8d929e] to-35%" />

      {/* node context menu */}
      <div className={menuClass + "top-[390px] left-[1221px] h-[145px] w-[189px] rounded-[4px]"}>
        <div className="h-[33px] pt-[9px] pl-[9px] text-[16.300px] leading-[20px] font-bold tracking-[0.600px] text-[#7b98fa]">N0F6N2</div>
        <Item label="Visual Mapping Bypass" arrow />
        <Item label="Nested Network" arrow />
        <Item label="Use Web Services" arrow />
        <Item label="Hide Node" />
        <div className="mt-[4px] mb-[5.500px] h-px bg-[#dcdcdc]" />
        <Item label="LinkOut" arrow active />
        <div className="mt-[4.500px] h-px bg-[#d0d0d0]" />
      </div>
      <div className={menuClass + "top-[499px] left-[1410px] h-[267px] w-[182px] rounded-tr-[4px] rounded-b-[4px] pt-[4px]"}>
        <Item label="Database" muted />
        {databases.map((d) => (
          <Item key={d} label={d} arrow active={d === "UniProt"} />
        ))}
      </div>
      <div className={menuClass + "top-[707px] left-[1592px] h-[42px] w-[88px] rounded-r-[4px] rounded-bl-[4px] pt-[4px]"}>
        <Item label="PIR" />
        <Item label="KB Beta" />
      </div>
      <svg className="absolute top-[604px] left-[1610px] h-[98px] w-[46px] drop-shadow-[0_3px_3px_rgba(0,0,0,0.4)]" viewBox="0 0 46 98">
        <path d="M13 3h20v69.500h8.500L23 92L4.500 72.500H13z" fill="#b31919" />
      </svg>
    </div>
  );
}
